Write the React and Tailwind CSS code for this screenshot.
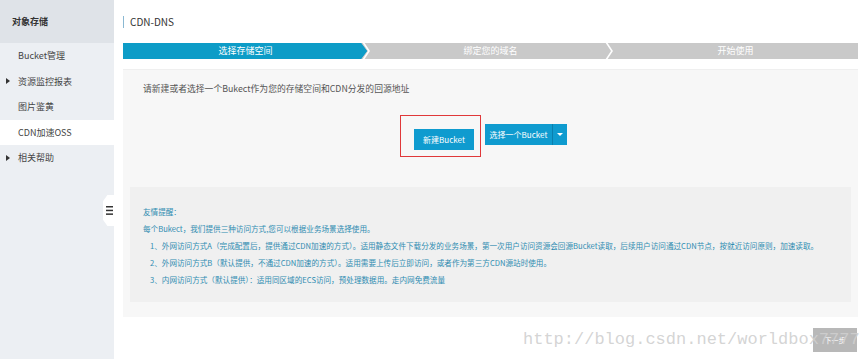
import React from 'react';

const font = { fontFamily: '"Noto Sans CJK SC", "Noto Sans", sans-serif' };

const navItems = [
  { label: 'Bucket管理', arrow: false },
  { label: '资源监控报表', arrow: true },
  { label: '图片鉴黄', arrow: false },
  { label: 'CDN加速OSS', arrow: false, active: true },
  { label: '相关帮助', arrow: true },
];

const Sidebar = () => (
  <div className="relative w-[114px] shrink-0 bg-[#eceff3] h-[359px]">
    {/* Header */}
    <div className="h-[43px] bg-[#dfe3e8] flex items-center pl-[12px] text-[9px] font-bold text-[#333]">
      对象存储
    </div>
    {navItems.map((item) => (
      <div
        key={item.label}
        className={`h-[25.5px] flex items-center relative pl-[18px] text-[9px] text-[#444] ${
          item.active ? 'bg-white' : ''
        }`}
      >
        {item.arrow && (
          <span className="absolute left-[6px] top-1/2 -translate-y-1/2 w-0 h-0 border-y-[3px] border-y-transparent border-l-[4px] border-l-[#333]"></span>
        )}
        {item.label}
      </div>
    ))}

    {/* Collapse tab */}
    <div className="absolute right-0 top-[195px] w-[11px] h-[31px] bg-white [clip-path:polygon(40%_0,100%_0,100%_100%,40%_100%,0_80%,0_20%)] flex items-center justify-end pr-[1px]">
      <svg width="7" height="9" viewBox="0 0 7 9">
        <rect x="0" y="0" width="7" height="1.5" fill="#333" />
        <rect x="0" y="3.7" width="7" height="1.5" fill="#333" />
        <rect x="0" y="7.4" width="7" height="1.5" fill="#333" />
      </svg>
    </div>
  </div>
);

const Steps = () => (
  <div className="relative h-[16px] flex bg-[#c9c9c9] text-[9px] text-white">
    <div className="w-1/3 bg-[#0d9cc7] flex items-center justify-center">选择存储空间</div>
    <div className="w-1/3 flex items-center justify-center">绑定您的域名</div>
    <div className="w-1/3 flex items-center justify-center">开始使用</div>
    {/* chevrons */}
    <svg className="absolute left-0 top-0" width="735" height="16" viewBox="0 0 735 16">
      <polygon points="238,0 244,8 238,16 245,16 245,0" fill="#c9c9c9" />
      <polygon points="238,0 244,8 238,16" fill="#0d9cc7" />
      <polyline points="240,-1 246,8 240,17" fill="none" stroke="#fff" strokeWidth="1.6" />
      <polyline points="483,-1 489,8 483,17" fill="none" stroke="#fff" strokeWidth="1.6" />
    </svg>
  </div>
);

const tips = [
  '1、外网访问方式A（完成配置后，提供通过CDN加速的方式）。适用静态文件下载分发的业务场景，第一次用户访问资源会回源Bucket读取，后续用户访问通过CDN节点，按就近访问原则，加速读取。',
  '2、外网访问方式B（默认提供，不通过CDN加速的方式）。适用需要上传后立即访问，或者作为第三方CDN源站时使用。',
  '3、内网访问方式（默认提供）：适用同区域的ECS访问，预处理数据用。走内网免费流量',
];

const App = () => {
  return (
    <div className="w-[865px] h-[359px] flex bg-white overflow-hidden relative" style={font}>
      <Sidebar />

      <div className="flex-1 pl-[9px] pr-[7px]">
        {/* Title */}
        <div className="h-[43px] flex items-center">
          <span className="w-[1px] h-[12px] bg-[#8ab8d2] mr-[6px]"></span>
          <span className="text-[10px] text-[#333]">CDN-DNS</span>
        </div>

        <Steps />

        {/* Panel */}
        <div className="mt-[10px] h-[248px] bg-[#f7f7f7] border-t border-[#efefef] px-[7px] pt-[12px]">
          <div className="pl-[13px] text-[8.8px] text-[#555]">
            请新建或者选择一个Bukect作为您的存储空间和CDN分发的回源地址
          </div>

          <div className="mt-[20px] flex items-start gap-[4px] pl-[270px]">
            <div className="border-[1.5px] border-[#e0383a] pl-[13px] pr-[6px] pt-[7.5px] pb-[5.5px]">
              <button className="h-[21px] w-[60px] bg-[#0f9bcf] text-white text-[8px]">新建Bucket</button>
            </div>
            <div className="pt-[9px]">
              <div className="h-[21px] w-[82px] bg-[#0f9bcf] text-white text-[8px] flex">
                <span className="flex-1 flex items-center justify-center">选择一个Bucket</span>
                <span className="w-[15px] border-l border-[#0a7fae] flex items-center justify-center">
                  <span className="w-0 h-0 border-x-[3px] border-x-transparent border-t-[3px] border-t-white"></span>
                </span>
              </div>
            </div>
          </div>

          {/* Info box */}
          <div className="mt-[30px] h-[115px] bg-[#f0f0f0] pl-[13px] pt-[16px] text-[7.6px] text-[#2f8cb0]">
            <div className="h-[17px] leading-[17px]">友情提醒：</div>
            <div className="h-[17px] leading-[17px]">每个Bukect，我们提供三种访问方式,您可以根据业务场景选择使用。</div>
            {tips.map((t) => (
              <div key={t} className="h-[17px] leading-[17px] pl-[7px] whitespace-nowrap">
                {t}
              </div>
            ))}
          </div>
        </div>

        {/* Footer */}
        <div className="mt-[11px] flex justify-end pr-[1px]">
          <button className="h-[24px] w-[44px] bg-[#b8b8b8] text-white text-[7px]">下一步</button>
        </div>
      </div>

      {/* Watermark */}
      <div
        className="absolute left-[523px] top-[330px] text-[17px] leading-[20px] text-[#cfcfcf]/90 pointer-events-none"
        style={{ fontFamily: '"Liberation Mono", monospace' }}
      >
        http://blog.csdn.net/worldbox7777
      </div>
    </div>
  );
};

export default App;
